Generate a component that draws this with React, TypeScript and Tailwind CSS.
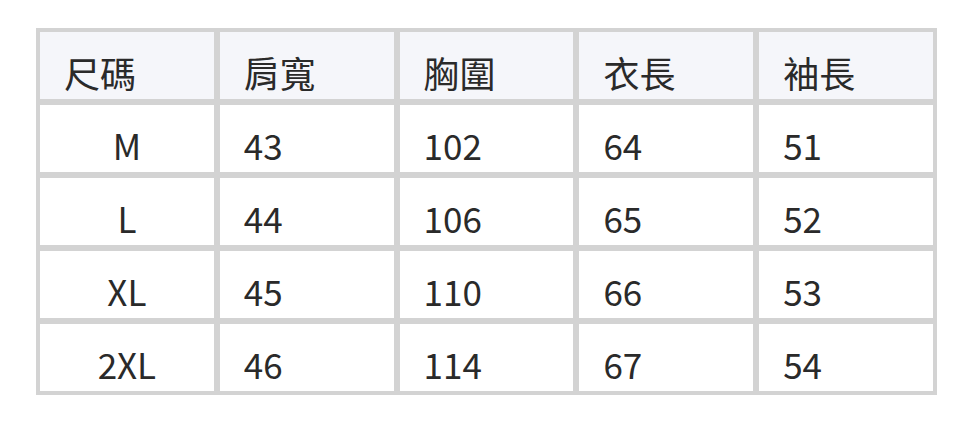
import React from 'react'

const HEADERS = ['尺碼', '肩寬', '胸圍', '衣長', '袖長']

const ROWS = [
  ['M', '43', '102', '64', '51'],
  ['L', '44', '106', '65', '52'],
  ['XL', '45', '110', '66', '53'],
  ['2XL', '46', '114', '67', '54'],
]

const font = { fontFamily: '"Noto Sans CJK TC", "Noto Sans", sans-serif' }

export default function App() {
  return (
    <div className="min-h-screen bg-white pl-9 pt-7" style={font}>
      <div className="grid w-[901px] grid-cols-5 auto-rows-[67px] gap-[6px] bg-[#d3d3d3] p-1 text-[35px] text-[#2a2a2a]">
        {HEADERS.map((h) => (
          <div key={h} className="flex items-end bg-[#f5f6fa] pb-1 pl-6 text-[36px] leading-[46px]">
            {h}
          </div>
        ))}
        {ROWS.map((row) =>
          row.map((cell, i) => (
            <div
              key={row[0] + i}
              className={`flex items-end bg-white pb-1 leading-[46px] ${i === 0 ? 'justify-center' : 'pl-6'}`}
            >
              {cell}
            </div>
          ))
        )}
      </div>
    </div>
  )
}
